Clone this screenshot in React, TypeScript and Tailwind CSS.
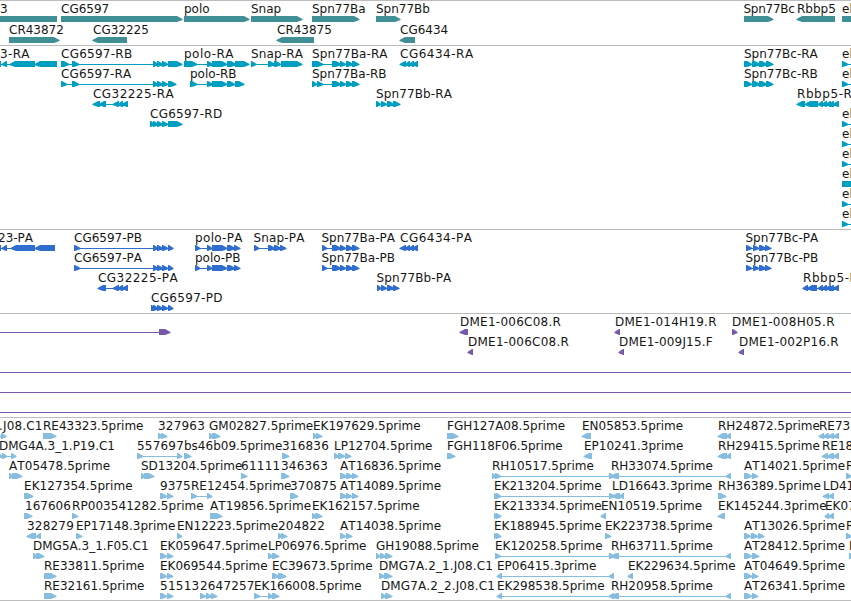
type Strand = "+" | "-" | "=";
// label x, label text, strand, exon segments "start:end start:end"
type Feature = [number, string, Strand, string];
type Track = { color: string; rowClass: string; className: string; rows: Feature[][] };

const exonsRB = "153:158 157:163 162:168";
const ba = "332:341 340:346 346:353 352:359";
const rb = "818:823 822:827 826:831 829:834 833:839";
const el: Feature = [842, "el", "+", "842:848 860:866"];
const rhLong = "611:619 726:731";

// Additional width, in pixels, spread over a label's letters
const extraWidth: Record<string, number> = {
  "Spn77Bc": -1.5,
  "3-RA": 1,
  "CG6597-RB": 2,
  "CG6597-RA": 1,
  "CG6597-RD": 2,
  "CG6597-PD": 2.5,
  "CG32225-RA": 4,
  "CG32225-PA": 4,
  "CG6434-RA": 4,
  "CG6434-PA": 4,
  "Spn77Bb-RA": 1,
  "Spn77Bb-PA": 1,
  "Spn77Ba-RA": 1,
  "polo-RA": 3,
  "polo-PA": 2,
  "Snap-RA": 1,
  "Snap-PA": 1,
  "Rbbp5-RA": 4,
  "Rbbp5-PA": 4,
  "DME1-006C08.R": 3,
  "DME1-014H19.R": 3,
  "DME1-009J15.F": 2,
  "DME1-008H05.R": 4,
  "DME1-002P16.R": 3,
  ".J08.C1": 1,
  "AT16836.5prime": 1,
  "AT14089.5prime": 1,
  "AT14038.5prime": 1,
  "AT05478.5prime": 1,
  "AT19856.5prime": 1,
  "AT14021.5prime": 1,
  "AT13026.5prime": 1,
  "AT28412.5prime": 1,
  "AT04649.5prime": 1,
  "AT26341.5prime": 1,
  "EK127354.5prime": 1,
  "RP003541282.5prime": 1,
  "RH36389.5prime": 1,
  "EK145244.3prime": 1,
  "DMG7A.2_1.J08.C1": 1.5,
  "DMG7A.2_2.J08.C1": 1.5,
  "FGH118F06.5prime": -1,
  "327963": 1,
  "557697": 1,
  "316836": 1,
  "328279": 1,
  "204822": 1,
  "346363": 1,
  "370875": 1,
  "61111": 1,
  "51513": 1,
  "2647257": 1,
};

const tracks: Track[] = [
  {
    color: "#408f94",
    rowClass: "h-[21px]",
    className: "h-[45px]",
    rows: [
      [
        [0, "3", "=", "-5:57"],
        [61, "CG6597", "+", "61:182"],
        [184, "polo", "+", "184:249"],
        [251, "Snap", "+", "251:302"],
        [312, "Spn77Ba", "+", "312:359"],
        [376, "Spn77Bb", "+", "376:400"],
        [743.5, "Spn77Bc", "+", "744:773"],
        [797, "Rbbp5", "-", "797:835"],
        [842, "el", "=", "842:860"],
      ],
      [
        [9, "CR43872", "+", "9:59"],
        [93, "CG32225", "-", "93:127"],
        [277, "CR43875", "-", "277:314"],
        [400, "CG6434", "-", "400:415"],
      ],
    ],
  },
  {
    color: "#009fbf",
    rowClass: "h-[20px]",
    className: "h-[184px]",
    rows: [
      [
        [0, "3-RA", "-", "-4:1 2:7 10:35 35:57"],
        [61, "CG6597-RB", "+", "61:69 72:79 " + exonsRB + " 168:182"],
        [184, "polo-RA", "+", "184:197 207:213 212:227 227:236 235:249"],
        [251, "Snap-RA", "+", "251:256 268:275 274:281 281:302"],
        [312, "Spn77Ba-RA", "+", "312:323 " + ba],
        [400, "CG6434-RA", "-", "400:406 405:410 409:414 412:418"],
        [744, "Spn77Bc-RA", "+", "744:752 752:760 759:767 766:773"],
        el,
      ],
      [
        [61, "CG6597-RA", "+", "61:67 72:79 " + exonsRB + " 168:176"],
        [190, "polo-RB", "+", "190:197 207:213 212:227 227:235 235:244"],
        [312, "Spn77Ba-RB", "+", "312:317 317:323 " + ba],
        [744, "Spn77Bc-RB", "+", "744:752 752:760 759:767 766:773"],
        el,
      ],
      [
        [93, "CG32225-RA", "-", "93:100 99:106 113:119 118:123 122:128"],
        [376, "Spn77Bb-RA", "+", "376:381 381:387 387:394 393:400"],
        [797, "Rbbp5-RA", "-", "797:805 805:818 " + rb],
      ],
      [[150, "CG6597-RD", "+", "150:154 " + exonsRB + " 168:182"], el],
      [el],
      [el],
      [[842, "el", "=", "842:860"]],
      [el],
      [el],
    ],
  },
  {
    color: "#2f6dcf",
    rowClass: "h-[20px]",
    className: "h-[84px]",
    rows: [
      [
        [-2, "23-PA", "-", "-4:1 2:7 11:35 35:55"],
        [74, "CG6597-PB", "+", "74:80 " + exonsRB + " 168:173"],
        [195, "polo-PA", "+", "195:200 207:212 212:227 227:235 234:240"],
        [253.5, "Snap-PA", "+", "254:259 268:275 274:281 280:286"],
        [321.5, "Spn77Ba-PA", "+", "322:327 " + ba],
        [400, "CG6434-PA", "-", "400:406 405:410 409:414 412:418"],
        [745.5, "Spn77Bc-PA", "+", "746:752 753:759 759:766 765:771"],
      ],
      [
        [74, "CG6597-PA", "+", "74:80 " + exonsRB + " 168:173"],
        [195, "polo-PB", "+", "195:200 207:212 212:227 227:235 234:240"],
        [321.5, "Spn77Ba-PB", "+", "322:327 " + ba],
        [745.5, "Spn77Bc-PB", "+", "746:752 753:759 759:766 765:771"],
      ],
      [
        [98, "CG32225-PA", "-", "98:106 113:119 118:123 122:128"],
        [376.5, "Spn77Bb-PA", "+", "377:381 381:387 387:394 393:399"],
        [803, "Rbbp5-PA", "-", "803:808 807:817 " + rb],
      ],
      [[151, "CG6597-PD", "+", "151:154 " + exonsRB + " 168:173"]],
    ],
  },
  {
    color: "#7659a8",
    rowClass: "h-[20px]",
    className: "h-[104px]",
    rows: [
      [
        [-99, "", "+", "-20:-10 159:170"],
        [460, "DME1-006C08.R", "-", "460:468"],
        [615, "DME1-014H19.R", "-", "615:620"],
        [732, "DME1-008H05.R", "+", "732:737"],
      ],
      [
        [468, "DME1-006C08.R", "-", "468:473"],
        [619, "DME1-009J15.F", "-", "619:624"],
        [739, "DME1-002P16.R", "-", "739:744"],
      ],
      [[-99, "", "+", "-20:-10 870:880"]],
      [[-99, "", "+", "-20:-10 870:880"]],
      [[-99, "", "+", "-20:-10 870:880"]],
    ],
  },
  {
    color: "#87bddf",
    rowClass: "h-[20px]",
    className: "h-[184px] border-b",
    rows: [
      [
        [-1, ".J08.C1", "+", "-6:1 1:6"],
        [43, "RE43323.5prime", "+", "43:56"],
        [158, "327963", "+", "158:162 161:167"],
        [209, "GM02827.5prime", "+", "209:213 212:220"],
        [313, "EK197629.5prime", "+", "313:317 316:322"],
        [447, "FGH127A08.5prime", "+", "447:458"],
        [582, "EN05853.5prime", "-", "582:591"],
        [718, "RH24872.5prime", "-", "718:727 726:731"],
        [819, "RE73", "-", "819:824 823:829 828:834 833:839"],
      ],
      [
        [-1, "DMG4A.3_1.P19.C1", "+", "-4:3 2:7 11:16"],
        [137, "557697", "+", "137:143 177:182"],
        [184, "bs46b09.5prime", "+", "184:191"],
        [282, "316836", "+", "282:289"],
        [334, "LP12704.5prime", "+", "334:339 338:345 345:351"],
        [447, "FGH118F06.5prime", "+", "447:455"],
        [584, "EP10241.3prime", "-", "584:592"],
        [718, "RH29415.5prime", "-", "718:727 726:731"],
        [822, "RE18", "-", "822:828 827:834 833:839"],
      ],
      [
        [9, "AT05478.5prime", "+", "9:13 12:22"],
        [141, "SD13204.5prime", "+", "141:145 144:154"],
        [241, "61111", "+", "241:247"],
        [281, "346363", "+", "281:289"],
        [340, "AT16836.5prime", "+", "340:347 346:353 352:358"],
        [492, "RH10517.5prime", "+", "492:496 495:501 609:615"],
        [611, "RH33074.5prime", "-", rhLong],
        [744, "AT14021.5prime", "+", "744:752 752:758"],
        [846, "RE", "+", "846:852"],
      ],
      [
        [24, "EK127354.5prime", "+", "24:33"],
        [160, "9375", "+", "160:167 167:173"],
        [191, "RE12454.5prime", "+", "191:197 207:212"],
        [290, "370875", "+", "290:298"],
        [340, "AT14089.5prime", "+", "340:347 346:352 352:358"],
        [494, "EK213204.5prime", "+", "494:497 496:501 609:615"],
        [612, "LD16643.3prime", "-", "612:620 619:624"],
        [718, "RH36389.5prime", "+", "718:726"],
        [823, "LD41", "-", "823:829 828:834"],
      ],
      [
        [25, "167606", "+", "24:32"],
        [72, "RP003541282.5prime", "+", "72:78"],
        [210, "AT19856.5prime", "+", "210:222"],
        [312, "EK162157.5prime", "+", "312:316 315:322"],
        [494, "EK213334.5prime", "+", "494:497 496:501"],
        [601, "EN10519.5prime", "-", "601:606"],
        [718, "EK145244.3prime", "-", "718:725"],
        [825, "EK07", "-", "825:829 828:834"],
      ],
      [
        [27, "328279", "-", "27:36 36:41"],
        [76, "EP17148.3prime", "+", "76:82"],
        [177, "EN12223.5prime", "+", "177:182"],
        [278, "204822", "+", "278:282 281:287"],
        [340, "AT14038.5prime", "+", "340:346 346:352"],
        [494, "EK188945.5prime", "+", "494:497 496:501"],
        [605, "EK223738.5prime", "+", "605:611"],
        [744, "AT13026.5prime", "+", "744:751 751:758 758:764"],
        [846, "RE", "+", "846:852"],
      ],
      [
        [33, "DMG5A.3_1.F05.C1", "+", "33:37 36:44"],
        [160, "EK059647.5prime", "+", "160:167 167:173"],
        [268, "LP06976.5prime", "+", "268:273 272:279"],
        [376, "GH19088.5prime", "+", "376:380 380:386 385:392"],
        [495, "EK120258.5prime", "+", "495:501 609:615"],
        [611, "RH63711.5prime", "-", rhLong],
        [744, "AT28412.5prime", "+", "744:752 752:759"],
        [849, "E", "+", "849:858"],
      ],
      [
        [44, "RE33811.5prime", "+", "44:56"],
        [160, "EK069544.5prime", "+", "160:167 167:173"],
        [272, "EC39673.5prime", "+", "272:279 278:286"],
        [379, "DMG7A.2_1.J08.C1", "+", "379:385 384:392"],
        [497, "EP06415.3prime", "-", "497:502 609:614"],
        [628, "EK229634.5prime", "-", "628:633"],
        [744, "AT04649.5prime", "+", "744:752 752:758"],
      ],
      [
        [44, "RE32161.5prime", "+", "44:56"],
        [160, "51513", "+", "160:167 167:173"],
        [200, "2647257", "+", "200:206 206:212 211:217"],
        [254, "EK166008.5prime", "+", "254:260 268:273 272:279"],
        [381, "DMG7A.2_2.J08.C1", "+", "381:386 385:392"],
        [497, "EK298538.5prime", "-", "497:502 609:614"],
        [611, "RH20958.5prime", "-", rhLong],
        [744, "AT26341.5prime", "+", "744:752 752:758"],
      ],
    ],
  },
];

function segmentPath(a: number, b: number, strand: Strand) {
  if (strand === "=") return `M${a} 15H${b}V21H${a}Z`;
  const head = Math.min(6, b - a);
  return strand === "+"
    ? `M${a} 15H${b - head + 1}L${b + 0.5} 18V19L${b - head + 1} 21H${a}Z`
    : `M${b} 15H${a + head - 1}L${a - 0.5} 18V19L${a + head - 1} 21H${b}Z`;
}

function Row({ features, color, className }: { features: Feature[]; color: string; className: string }) {
  return (
    <div className={"relative shrink-0 " + className}>
      <svg className="block h-[22px] w-[851px]" viewBox="0 0 851 22" fill={color}>
        {features.map(([, , strand, spec], i) => {
          const segs = spec.split(" ").map((s) => s.split(":").map(Number));
          const start = segs[0][0];
          const end = segs[segs.length - 1][1];
          return (
            <g key={i}>
              {segs.length > 1 && (
                <rect x={start} y={18} width={end - start} height={1} />
              )}
              <path d={segs.map(([a, b]) => segmentPath(a, b, strand)).join("")} />
            </g>
          );
        })}
      </svg>
      {features.map(([x, label], i) => (
        <span
          key={i}
          className="absolute top-0 leading-[16px] whitespace-pre"
          style={{ left: x, letterSpacing: (extraWidth[label] ?? 0) / Math.max(1, label.length - 1) }}
        >
          {label}
        </span>
      ))}
    </div>
  );
}

export default function App() {
  return (
    <main className="flex h-[601px] w-[851px] flex-col overflow-hidden bg-white font-['DejaVu_Sans',sans-serif] text-[12px] text-[#161616] [font-kerning:none]">
      {tracks.map((track, i) => (
        <section
          key={i}
          className={"flex shrink-0 flex-col overflow-hidden border-t border-[#bdbdbd] " + track.className}
        >
          {track.rows.map((features, j) => (
            <Row key={j} features={features} color={track.color} className={track.rowClass} />
          ))}
        </section>
      ))}
    </main>
  );
}
